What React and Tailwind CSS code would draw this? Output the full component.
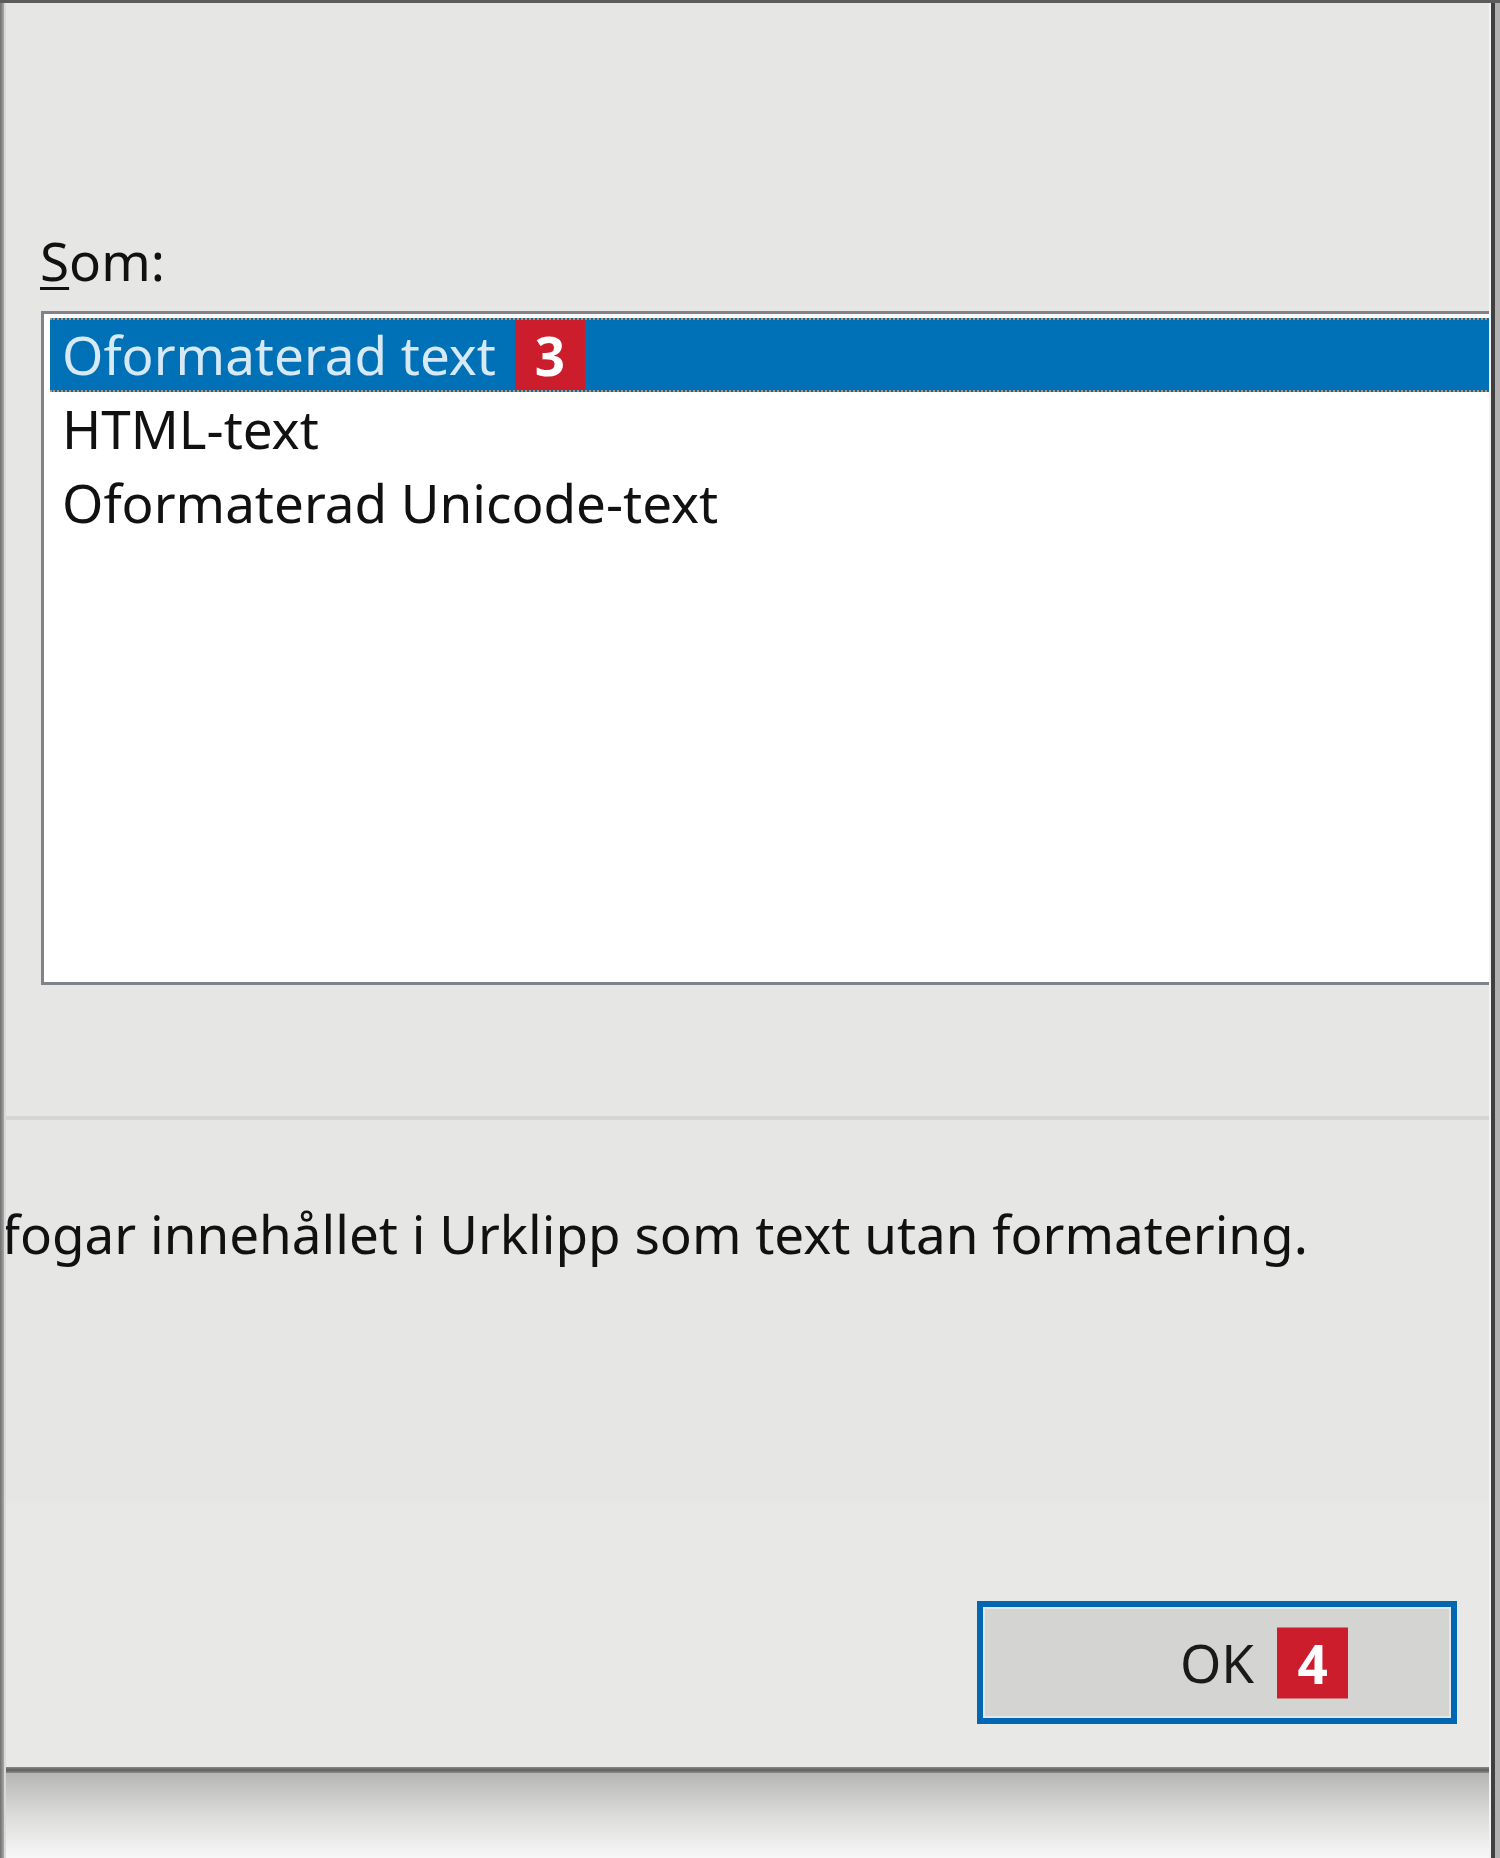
export default function App() {
  const rader = ["Oformaterad text", "HTML-text", "Oformaterad Unicode-text"];

  return (
    <div className="w-[1500px] h-[1858px] flex flex-col overflow-hidden bg-[#e6e6e4] text-[#111] font-['Noto_Sans',sans-serif] text-[53px]">
      {/* ram upptill */}
      <div className="h-[3px] bg-[#5c5c5c]" />
      <div className="flex flex-1 min-h-0">
        <div className="w-[4px] bg-gradient-to-r from-[#6f6f6f] to-[#a9a9a9]" />
        <div className="w-[2px] bg-[#d9d9d7]" />

        <div className="flex-1 min-w-0 flex flex-col overflow-hidden">
          {/* Som: */}
          <div className="mt-[225px] pl-[34px] leading-[66px] h-[66px]">
            <span className="underline decoration-[3px] underline-offset-[6px]">S</span>om:
          </div>

          {/* lista */}
          <div className="mt-[17px] ml-[35px] w-[1520px] h-[674px] border-[3px] border-[#80838a] bg-white pt-[4px] pl-[6px]">
            {rader.map((r, i) =>
              i === 0 ? (
                <div
                  key={r}
                  className="h-[74px] flex items-center pl-[12px] bg-[#0070b7] border-y-2 border-dotted border-[#c98d60] text-[#d6e9f5]"
                >
                  <span>{r}</span>
                  <span className="ml-[19px] w-[70px] h-[70px] flex items-center justify-center bg-[#cc1d2d] text-white font-bold leading-none">
                    3
                  </span>
                </div>
              ) : (
                <div key={r} className="h-[74px] flex items-center pl-[12px]">
                  {r}
                </div>
              )
            )}
          </div>

          {/* avdelare */}
          <div className="mt-[131px] h-[4px] bg-[#d5d5d3]" />

          {/* beskrivning */}
          <div className="mt-[81px] h-[66px] leading-[66px] whitespace-nowrap -ml-[55px]">
            Infogar innehållet i Urklipp som text utan formatering.
          </div>

          {/* knapprad */}
          <div className="mt-[236px] h-[264px] bg-[#e8e9e7] flex justify-end items-start pr-[32px] pt-[98px]">
            <button className="w-[480px] h-[123px] border-[6px] border-[#0067b2] bg-[#d4d5d3] shadow-[inset_0_0_0_2px_#e3e7e9] flex items-center justify-center">
              <span className="relative leading-none text-[#1a1a1a]">
                OK
                <span className="absolute left-full top-1/2 -translate-y-1/2 ml-[23px] w-[71px] h-[71px] flex items-center justify-center bg-[#cc1d2d] text-white font-bold">
                  4
                </span>
              </span>
            </button>
          </div>

          {/* dialogens underkant och skugga */}
          <div className="h-[6px] bg-gradient-to-b from-[#8a8a8a] via-[#5f5f5f] to-[#8c8c8a]" />
          <div className="flex-1 bg-gradient-to-b from-[#b6b7b4] via-[#dcdddb] to-[#f6f7f6]" />
        </div>

        <div className="w-[2px] bg-[#f2f2f2]" />
        <div className="w-[4px] bg-[#3f3f3f]" />
        <div className="w-[5px] bg-[#b0b0b0]" />
      </div>
    </div>
  );
}
